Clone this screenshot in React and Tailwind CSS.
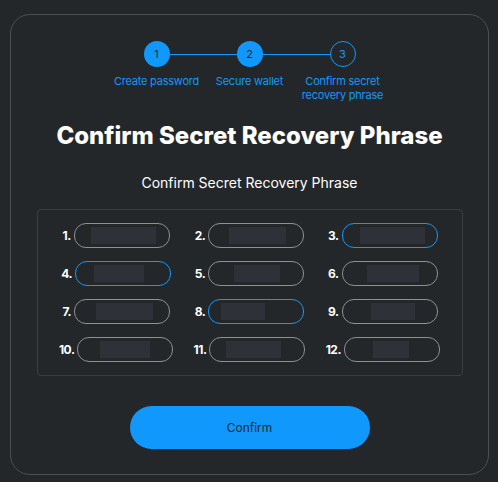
import React from 'react';

const steps = [
  { n: 1, label: ['Create password'], done: true },
  { n: 2, label: ['Secure wallet'], done: true },
  { n: 3, label: ['Confirm secret', 'recovery phrase'], done: false },
];

// masked words: left offset + width of the grey block inside each input
const words = [
  { n: 1, l: 16, w: 65, focus: false },
  { n: 2, l: 20, w: 57, focus: false },
  { n: 3, l: 17, w: 65, focus: true },
  { n: 4, l: 18, w: 50, focus: true },
  { n: 5, l: 25, w: 46, focus: false },
  { n: 6, l: 24, w: 52, focus: false },
  { n: 7, l: 21, w: 57, focus: false },
  { n: 8, l: 12, w: 44, focus: true },
  { n: 9, l: 28, w: 44, focus: false },
  { n: 10, l: 22, w: 50, focus: false },
  { n: 11, l: 16, w: 55, focus: false },
  { n: 12, l: 28, w: 36, focus: false },
];

const Stepper = () => (
  <div className="flex flex-col items-center">
    <div className="flex items-center">
      {steps.map((s, i) => (
        <React.Fragment key={s.n}>
          {i > 0 && <div className="w-[67px] h-px bg-[#1098fc]" />}
          <div
            className={`w-[26px] h-[26px] rounded-full flex items-center justify-center text-[11px] ${
              s.done ? 'bg-[#1098fc] text-[#24272a]' : 'border border-[#1098fc] text-[#1098fc]'
            }`}
          >
            {s.n}
          </div>
        </React.Fragment>
      ))}
    </div>
    <div className="flex mt-[7px]">
      {steps.map((s) => (
        <div
          key={s.n}
          className="w-[93px] flex flex-col items-center text-[11px] leading-[14px] tracking-[-0.02em] text-[#1098fc]"
        >
          {s.label.map((line) => (
            <span key={line} className="whitespace-nowrap">{line}</span>
          ))}
        </div>
      ))}
    </div>
  </div>
);

const WordInput = ({ word }) => (
  <div className="flex items-center justify-center gap-[3px]">
    <span className="text-[12px] font-bold tracking-[-0.04em] text-white">{word.n}.</span>
    <div
      className={`relative w-[96px] h-[25px] rounded-[12px] border ${
        word.focus ? 'border-[#1098fc]' : 'border-[#8d9094]'
      }`}
    >
      <div
        className="absolute top-[3px] h-[17px] bg-[#2f3139]"
        style={{ left: word.l, width: word.w }}
      />
    </div>
  </div>
);

export default function App() {
  return (
    <div
      className="w-[498px] h-[482px] bg-[#24272a] pt-[14px] pl-[10px] pr-[9px] pb-[7px]"
      style={{ fontFamily: 'Inter, "Liberation Sans", sans-serif' }}
    >
      <div className="h-full border border-[#4b4f53] rounded-[20px] flex flex-col items-center pt-[26px]">
        <Stepper />

        <h1 className="mt-[19px] text-[24px] leading-[30px] font-extrabold text-white">
          Confirm Secret Recovery Phrase
        </h1>

        <p className="mt-[22px] text-[14px] leading-[20px] text-white">Confirm Secret Recovery Phrase</p>

        <div className="mt-[16px] w-[426px] border border-[#3b3e42] rounded-[4px] px-[12px] py-[13px]">
          <div className="grid grid-cols-3 gap-y-[13px]">
            {words.map((w) => (
              <WordInput key={w.n} word={w} />
            ))}
          </div>
        </div>

        <button className="mt-[30px] w-[240px] h-[43px] rounded-full bg-[#1098fc] text-[12px] text-[#24272a]">
          Confirm
        </button>
      </div>
    </div>
  );
}
